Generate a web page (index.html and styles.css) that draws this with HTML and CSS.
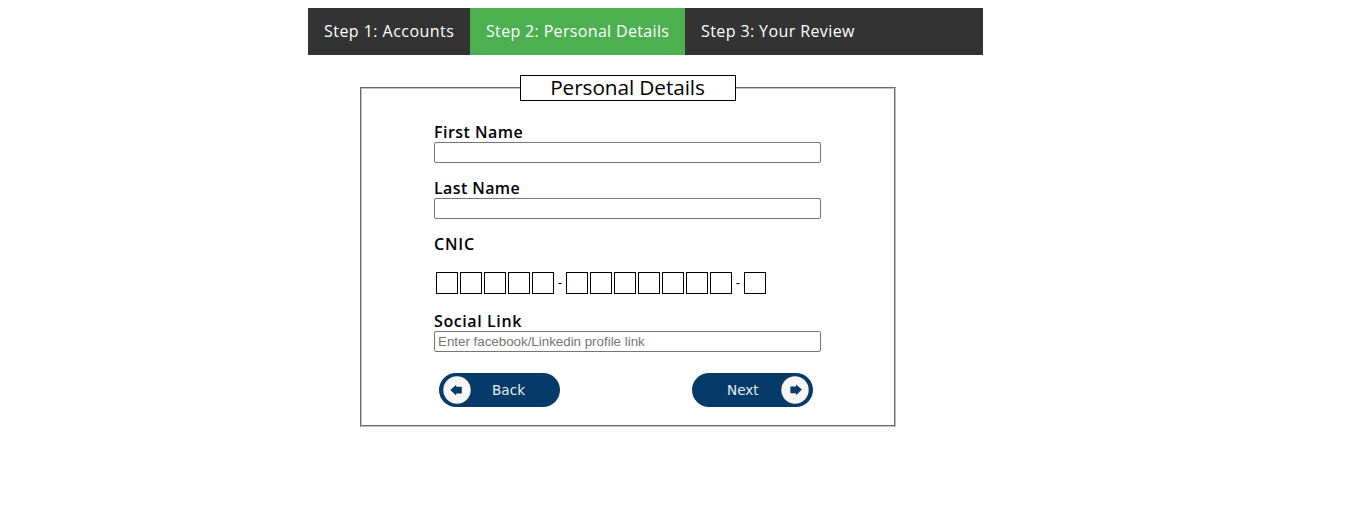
FILE: index.html
```html
<!DOCTYPE html>
<html lang="en">
<head>
<meta charset="utf-8">
<title>Personal Details</title>
<link rel="stylesheet" href="styles.css">
</head>
<body>
<nav class="steps">
  <a class="step step-accounts">Step 1: Accounts</a>
  <a class="step step-personal active">Step 2: Personal Details</a>
  <a class="step step-review">Step 3: Your Review</a>
</nav>
<form class="form">
  <fieldset class="panel">
    <legend class="title">Personal Details</legend>
    <label class="label label-first" for="first">First Name</label>
    <input class="field" id="first" type="text">
    <label class="label label-last" for="last">Last Name</label>
    <input class="field" id="last" type="text">
    <span class="label label-cnic">CNIC</span>
    <div class="cnic">
      <input class="digit"><input class="digit"><input class="digit"><input class="digit"><input class="digit">
      <span class="dash">-</span>
      <input class="digit"><input class="digit"><input class="digit"><input class="digit"><input class="digit"><input class="digit"><input class="digit">
      <span class="dash">-</span>
      <input class="digit">
    </div>
    <label class="label label-social" for="social">Social Link</label>
    <input class="field" id="social" type="text" placeholder="Enter facebook/Linkedin profile link">
    <div class="actions">
      <button class="pill back" type="button">
        <svg class="arrow" viewBox="0 0 28 28"><circle cx="14" cy="14" r="13.7" fill="#f8f6f5"/><path d="M7.3 14 13.2 8.8v2h5.6v6.8h-5.6v2z" fill="#063a69"/></svg>
        <span class="pill-text">Back</span>
      </button>
      <button class="pill next" type="button">
        <span class="pill-text">Next</span>
        <svg class="arrow" viewBox="0 0 28 28"><circle cx="14" cy="14" r="13.7" fill="#f8f6f5"/><path d="M20.9 13.6 15 8.4v2.2H9.4v6.6H15v2z" fill="#063a69"/></svg>
      </button>
    </div>
  </fieldset>
</form>
</body>
</html>
```
FILE: styles.css
```css
* { box-sizing: border-box; }
body {
  margin: 0;
  padding-top: 8px;
  background: #fff;
  color: #000;
  font-family: "Open Sans", "Noto Sans", sans-serif;
}
.steps {
  display: flex;
  width: 675px;
  height: 47px;
  margin-left: 308px;
  background: #333;
}
.step {
  padding: 0 16px;
  color: #fff;
  font-size: 16px;
  line-height: 46px;
  letter-spacing: 0.4px;
  white-space: nowrap;
}
.step-accounts { width: 162px; letter-spacing: 0.46px; }
.step-personal { width: 215px; letter-spacing: 0.34px; }
.active { background: #4caf50; }
.form { width: 536px; margin: 20px 0 0 360px; }
.panel {
  display: flex;
  flex-direction: column;
  align-items: flex-start;
  height: 352px;
  min-width: 0;
  margin: 0;
  padding: 21px 73px 0 72px;
  border: 2px groove #c0c0c0;
}
.title {
  width: 216px;
  height: 26px;
  margin: 0 auto;
  padding: 0;
  border: 1px solid #000;
  font-size: 20.8px;
  line-height: 23px;
  letter-spacing: -0.1px;
  text-align: center;
}
.label {
  height: 20px;
  font-size: 16px;
  font-weight: 600;
  line-height: 20px;
  letter-spacing: 0.48px;
  white-space: nowrap;
}
.label-last { letter-spacing: 0.4px; }
.label-cnic { letter-spacing: 0.8px; }
.label-social { letter-spacing: 0.6px; }
.field {
  width: 387px;
  height: 21px;
  margin: 0 0 15px;
  padding: 1px 3px;
  border: 1px solid #767676;
  border-radius: 2px;
  background: #fff;
  font: 13.333px "Liberation Sans", Arial, sans-serif;
}
.field::placeholder { color: #757575; }
.cnic {
  display: flex;
  gap: 2px;
  margin: 18px 0 17px 2px;
}
.digit {
  width: 22px;
  height: 22px;
  padding: 0;
  border: 1px solid #000;
  border-radius: 0;
}
.dash {
  width: 8px;
  font: 13.333px/21px "Liberation Sans", Arial, sans-serif;
  text-align: center;
}
.actions {
  display: flex;
  justify-content: space-between;
  width: 374px;
  margin: 6px 0 0 5px;
}
.pill {
  display: flex;
  align-items: center;
  width: 121px;
  height: 34px;
  padding: 0 4px;
  border: 0;
  border-radius: 17px;
  background: #063a69;
  color: #e8edf2;
}
.arrow { flex: none; width: 28px; height: 28px; }
.pill-text { font: 13.6px/34px "DejaVu Sans", sans-serif; }
.back .pill-text { margin-left: 21px; }
.next .pill-text { width: 54px; margin-left: 31px; text-align: left; }
```
